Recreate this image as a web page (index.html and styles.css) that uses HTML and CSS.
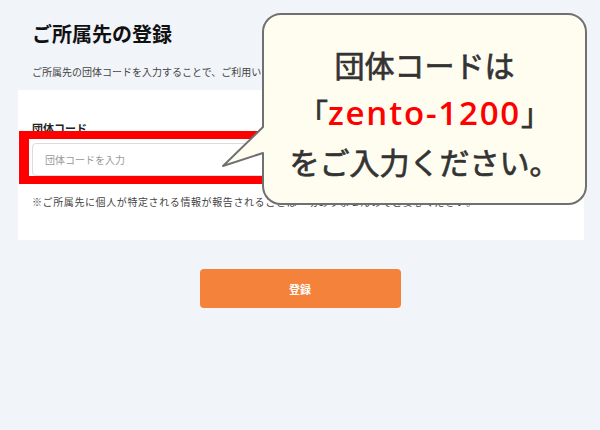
FILE: index.html
```html
<!DOCTYPE html>
<html lang="ja">
<head>
  <meta charset="UTF-8">
  <title>ご所属先の登録</title>
  <link rel="stylesheet" href="styles.css">
</head>
<body>

  <div class="page">
    <div class="header">
      <h1>ご所属先の登録</h1>
      <p class="lead">ご所属先の団体コードを入力することで、ご利用いただけるサービスが表示されます。</p>
    </div>

    <div class="card">
      <label class="label" for="code">団体コード</label>
      <div class="field">
        <input type="text" id="code" placeholder="団体コードを入力">
        <div class="mark"></div>
      </div>
      <p class="note">※ご所属先に個人が特定される情報が報告されることは一切ありませんのでご安心ください。</p>
    </div>

    <div class="actions">
      <button class="submit">登録</button>
    </div>

    <!-- 吹き出し -->
    <svg class="bubble-shape" width="370" height="195" viewBox="0 0 370 195">
      <path d="M61,2 H348 A18,18 0 0 1 366,20 V174 A18,18 0 0 1 348,192 H61 A18,18 0 0 1 43,174 V141 L3,154 L43,115 V20 A18,18 0 0 1 61,2 Z"
            fill="#fffdf0" stroke="#707070" stroke-width="2" stroke-linejoin="round"/>
    </svg>
    <div class="bubble-text">
      <span>団体コードは</span>
      <span>「<em>zento-1200</em>」</span>
      <span>をご入力ください。</span>
    </div>
  </div>

</body>
</html>
```

FILE: styles.css
```css
:root {
  --bg: #f1f4f9;
  --ink: #222;
  --orange: #f5823a;
  --red: #ff0000;
}

body {
  margin: 0;
  background-color: var(--bg);
  color: var(--ink);
  font-family: "Noto Sans CJK JP", "Noto Sans", sans-serif;
}

.page {
  position: relative;
  height: 430px;
  overflow: hidden;
}

.header {
  padding: 22px 32px 0;
}

h1 {
  margin: 0;
  font-size: 20px;
  line-height: 24px;
  font-weight: 700;
  color: #111;
}

.lead {
  margin: 19px 0 0;
  font-size: 10px;
  line-height: 14px;
  color: #444;
  white-space: nowrap;
}

.card {
  margin: 11px 16px 0 18px;
  padding: 31px 14px 31px;
  background-color: white;
}

.label {
  display: block;
  font-size: 11px;
  line-height: 14px;
  font-weight: 700;
  color: #222;
}

.field {
  position: relative;
  margin-top: 8px;
}

.field input {
  display: block;
  box-sizing: border-box;
  width: 100%;
  height: 33px;
  padding: 0 12px;
  border: 1px solid #dcdcdc;
  border-radius: 4px;
  font-family: inherit;
  font-size: 10px;
  color: #333;
  background: white;
}

.field input::placeholder {
  color: #999;
}

.mark {
  position: absolute;
  left: -13px;
  top: -12px;
  width: 280px;
  height: 53px;
  box-sizing: border-box;
  border: 8px solid var(--red);
  border-left-width: 10px;
}

.note {
  margin: 19px 0 0;
  font-size: 10px;
  line-height: 14px;
  letter-spacing: 0.6px;
  color: #444;
  white-space: nowrap;
}

.actions {
  display: flex;
  justify-content: center;
  margin-top: 29px;
}

.submit {
  width: 201px;
  height: 39px;
  border: none;
  border-radius: 4px;
  background-color: var(--orange);
  color: white;
  font-family: inherit;
  font-size: 11px;
  font-weight: 700;
  cursor: pointer;
}

.bubble-shape {
  position: absolute;
  left: 220px;
  top: 12px;
}

.bubble-text {
  position: absolute;
  left: 263px;
  top: 14px;
  width: 323px;
  height: 190px;
  box-sizing: border-box;
  padding-top: 6px;
  display: flex;
  flex-direction: column;
  align-items: center;
  justify-content: center;
  font-size: 30px;
  line-height: 48px;
  font-weight: 400;
  -webkit-text-stroke: 0.7px #333;
  color: #333;
}

.bubble-text em {
  font-family: "Open Sans", "Noto Sans", sans-serif;
  font-size: 33px;
  font-style: normal;
  font-weight: 600;
  letter-spacing: 1.8px;
  -webkit-text-stroke: 0;
  color: var(--red);
}
```
